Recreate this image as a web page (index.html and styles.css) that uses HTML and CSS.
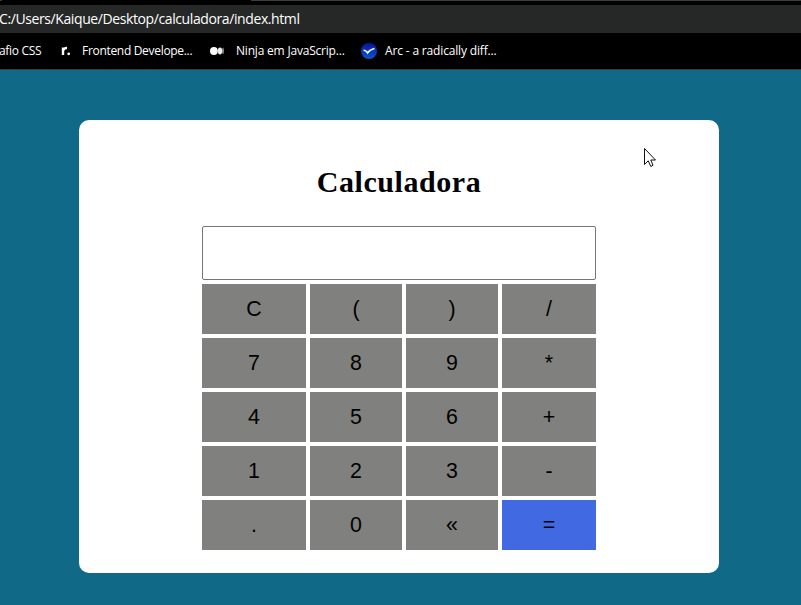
FILE: index.html
```html
<!DOCTYPE html>
<html lang="pt-BR">
<head>
<meta charset="UTF-8">
<title>Calculadora</title>
<link rel="stylesheet" href="styles.css">
</head>
<body>
<header class="browser">
  <div class="tab-edge"></div>
  <div class="address"><span>C:/Users/Kaique/Desktop/calculadora/index.html</span></div>
  <nav class="bookmarks">
    <span class="bookmark css">afio CSS</span>
    <svg class="icon-r" width="12" height="12" viewBox="0 0 12 12"><path d="M2 10V2.5M2.2 5.5Q2.6 3 6 3" fill="none" stroke="#fff" stroke-width="2.4"/><circle cx="7.7" cy="8.8" r="1.4" fill="#fff"/></svg>
    <span class="bookmark frontend">Frontend Develope...</span>
    <svg class="icon-medium" width="14" height="8" viewBox="0 0 14 8"><circle cx="3.9" cy="4" r="3.9" fill="#fff"/><ellipse cx="10" cy="4" rx="2.2" ry="3.4" fill="#eee"/><ellipse cx="13" cy="4" rx=".8" ry="3.2" fill="#aaa"/></svg>
    <span class="bookmark ninja">Ninja em JavaScrip...</span>
    <svg class="icon-arc" width="16" height="16" viewBox="0 0 16 16"><defs><linearGradient id="sky" x2="0" y2="1"><stop stop-color="#0714a0"/><stop offset="1" stop-color="#0d55cc"/></linearGradient></defs><circle cx="8" cy="8" r="8" fill="url(#sky)"/><path d="M2.5 7.2Q5 7.2 6.5 10Q9 6.2 13.5 5.4M6.5 9Q8.5 8.5 10 7" fill="none" stroke="#eaf8ff" stroke-width="1.5"/></svg>
    <span class="bookmark arc">Arc - a radically diff...</span>
  </nav>
</header>
<main class="page">
  <section class="card">
    <h1>Calculadora</h1>
    <div class="calculator">
      <input class="display" type="text" aria-label="Resultado">
      <button>C</button><button>(</button><button>)</button><button>/</button>
      <button>7</button><button>8</button><button>9</button><button>*</button>
      <button>4</button><button>5</button><button>6</button><button>+</button>
      <button>1</button><button>2</button><button>3</button><button>-</button>
      <button>.</button><button>0</button><button>«</button><button class="equals">=</button>
    </div>
  </section>
</main>
<svg class="cursor" width="13" height="20" viewBox="0 0 13 20"><path d="M.5.5V16.5L4.2 12.8L6.8 18.5L9 17.3L6.8 12H11.5Z" fill="#fff" stroke="#111"/></svg>
</body>
</html>
```
FILE: styles.css
```css
* { box-sizing: border-box; }
body { margin: 0; height: 605px; overflow: hidden; display: flex; flex-direction: column; background: #0f6987; }
.browser { height: 70px; flex: none; background: #000; color: #fff; font-family: "Open Sans", sans-serif; border-bottom: 1px solid #3c3c3c; white-space: nowrap; }
.tab-edge { height: 1px; margin-bottom: 4px; background: linear-gradient(90deg, #3c3c3c 2px, #000 2px, #000 251px, #3c3c3c 251px); }
.address { height: 28px; background: #262827; font-size: 14px; line-height: 28px; letter-spacing: -.4px; text-indent: -1px; }
.bookmarks { height: 36px; display: flex; align-items: center; font-size: 12px; }
.bookmark { flex: none; line-height: 20px; letter-spacing: -.2px; }
.bookmarks svg { flex: none; }
.bookmarks .css { width: 61px; text-indent: -1px; letter-spacing: -.3px; }
.icon-r { margin-right: 9px; }
.bookmarks .frontend { width: 128px; letter-spacing: -.31px; }
.icon-medium { margin-right: 12px; }
.ninja { width: 125px; }
.icon-arc { margin-right: 8px; }
.bookmarks .arc { letter-spacing: -.16px; }
.page { flex: 1; padding-top: 50px; }
.card { width: 640px; height: 453px; margin-left: 79px; padding-top: 43px; background: #fff; border-radius: 10px; }
h1 { margin: 0 0 26px; height: 37px; text-align: center; font: bold 30px/37px "Liberation Serif", serif; letter-spacing: .55px; }
.calculator { width: 394px; margin: 0 auto; display: grid; grid-template-columns: 104px 92px 92px 94px; grid-template-rows: 54px repeat(5, 50px); gap: 4px; }
.display { grid-column: 1 / -1; min-width: 0; border: 1px solid #767676; border-radius: 2px; background: #fff; }
button { border: 0; padding: 0; background: #80807e; color: #000; font: 21.33px "Liberation Sans", sans-serif; }
.equals { background: #4169e1; }
.cursor { position: absolute; left: 644px; top: 148px; }
```
